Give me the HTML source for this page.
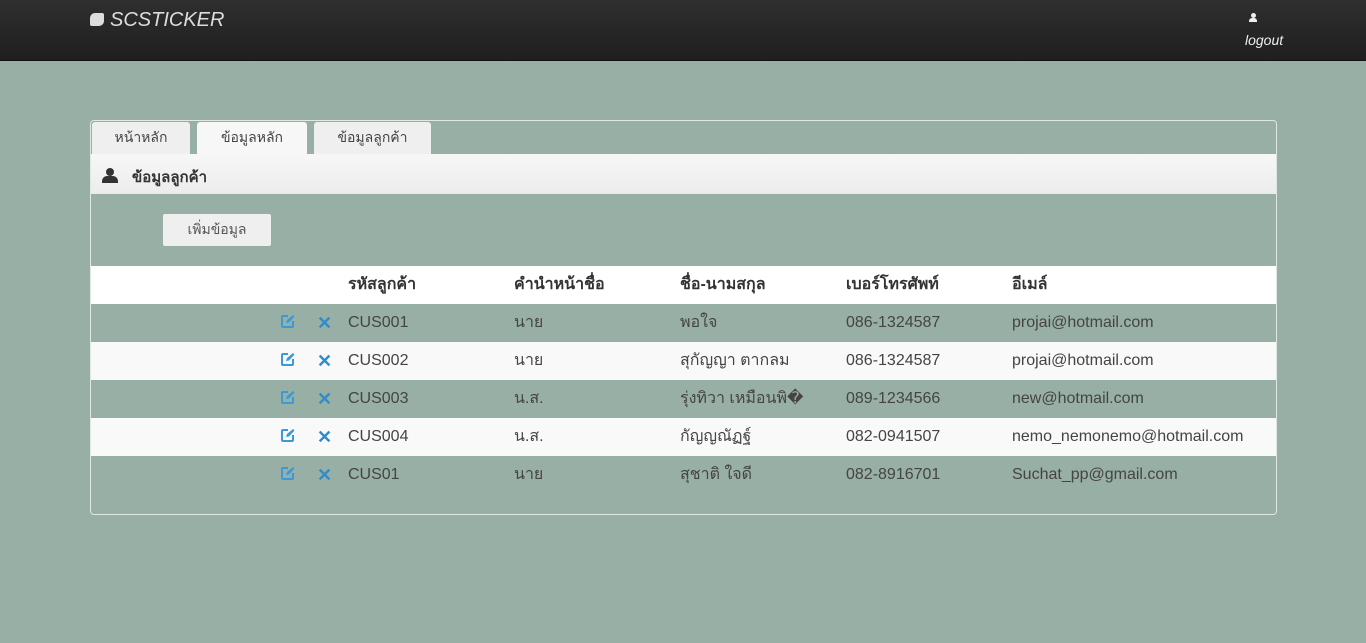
<!DOCTYPE html>
<html><head><meta charset="utf-8"><style>
body{margin:0;width:1366px;height:643px;background:#98afa5;font-family:"Liberation Sans","Noto Sans CJK SC",sans-serif;position:relative;overflow:hidden}
.nav{position:absolute;left:0;top:0;width:1366px;height:60px;background:linear-gradient(#2f2f2f,#1f1f1f);border-bottom:1px solid #111}
.brand{position:absolute;left:90px;top:9px;color:#ddd;font-size:20px;font-style:italic}
.brand i{display:inline-block;width:14px;height:13px;background:#ddd;border-radius:5px 2px 5px 2px;margin-right:6px;vertical-align:0}
.lo{position:absolute;left:1245px;top:32px;color:#eee;font-size:14px;font-style:italic}
.panel{position:absolute;left:90px;top:120px;width:1185px;height:393px;border:1px solid #e0e8e4;border-radius:4px}
.tab{position:absolute;top:1px;height:32px;background:#efefef;color:#444;font-size:14px;text-align:center;line-height:30px;border-radius:3px 3px 0 0}
.head{position:absolute;left:0;top:33px;width:1185px;height:40px;background:linear-gradient(#f7f7f7,#ececec);font-size:15px;font-weight:bold;color:#333;line-height:46px}
.btn{position:absolute;left:72px;top:93px;width:108px;height:32px;background:#efefef;border-radius:2px;font-size:14px;color:#555;text-align:center;line-height:30px}
.row{position:absolute;left:0;width:1185px;height:38px;font-size:16px;color:#444;line-height:38px}
.row span{position:absolute}
.w{background:#f9f9f9}
.th{background:#fff;font-weight:bold;color:#333}
.row span.e{left:189px;top:10px;line-height:0}
.x{left:226px;color:#2a8ed0;font-weight:bold;font-size:18px}
</style></head><body>
<div class="nav"><div class="brand"><i></i>SCSTICKER</div>
<div style="position:absolute;left:1249px;top:13px;width:8px;height:9px"><div style="width:5px;height:5px;border-radius:50%;background:#eee;margin-left:1.5px"></div><div style="width:8px;height:4px;background:#eee;border-radius:3px 3px 0 0"></div></div>
<div class="lo">logout</div></div>
<div class="panel">
<div class="tab" style="left:1px;width:98px">หน้าหลัก</div>
<div class="tab" style="left:106px;width:110px;background:#f7f7f7">ข้อมูลหลัก</div>
<div class="tab" style="left:223px;width:117px">ข้อมูลลูกค้า</div>
<div class="head"><span style="position:absolute;left:11px;top:14px;width:16px;height:16px;line-height:0"><span style="display:block;width:8px;height:8px;border-radius:50%;background:#333;margin-left:4px"></span><span style="display:block;width:16px;height:7px;background:#333;border-radius:5px 5px 0 0"></span></span><span style="position:absolute;left:41px;top:1px">ข้อมูลลูกค้า</span></div>
<div class="btn">เพิ่มข้อมูล</div>
<div class="row th" style="top:145px"><span style="left:257px">รหัสลูกค้า</span><span style="left:423px">คำนำหน้าชื่อ</span><span style="left:589px">ชื่อ-นามสกุล</span><span style="left:755px">เบอร์โทรศัพท์</span><span style="left:921px">อีเมล์</span></div>
<div class="row" style="top:183px"><span class="e"><svg width="15" height="15" viewBox="0 0 15 15"><path d="M8 2H3a1 1 0 0 0-1 1v9a1 1 0 0 0 1 1h9a1 1 0 0 0 1-1V7" fill="none" stroke="#3a9ad6" stroke-width="2"/><path d="M6 9l1-3 6-5 1.5 1.5-5.5 6z" fill="#3a9ad6"/></svg></span><span class="x">✕</span><span style="left:257px">CUS001</span><span style="left:423px">นาย</span><span style="left:589px">พอใจ</span><span style="left:755px">086-1324587</span><span style="left:921px">projai@hotmail.com</span></div>
<div class="row w" style="top:221px"><span class="e"><svg width="15" height="15" viewBox="0 0 15 15"><path d="M8 2H3a1 1 0 0 0-1 1v9a1 1 0 0 0 1 1h9a1 1 0 0 0 1-1V7" fill="none" stroke="#3a9ad6" stroke-width="2"/><path d="M6 9l1-3 6-5 1.5 1.5-5.5 6z" fill="#3a9ad6"/></svg></span><span class="x">✕</span><span style="left:257px">CUS002</span><span style="left:423px">นาย</span><span style="left:589px">สุกัญญา ตากลม</span><span style="left:755px">086-1324587</span><span style="left:921px">projai@hotmail.com</span></div>
<div class="row" style="top:259px"><span class="e"><svg width="15" height="15" viewBox="0 0 15 15"><path d="M8 2H3a1 1 0 0 0-1 1v9a1 1 0 0 0 1 1h9a1 1 0 0 0 1-1V7" fill="none" stroke="#3a9ad6" stroke-width="2"/><path d="M6 9l1-3 6-5 1.5 1.5-5.5 6z" fill="#3a9ad6"/></svg></span><span class="x">✕</span><span style="left:257px">CUS003</span><span style="left:423px">น.ส.</span><span style="left:589px">รุ่งทิวา เหมือนพิ�</span><span style="left:755px">089-1234566</span><span style="left:921px">new@hotmail.com</span></div>
<div class="row w" style="top:297px"><span class="e"><svg width="15" height="15" viewBox="0 0 15 15"><path d="M8 2H3a1 1 0 0 0-1 1v9a1 1 0 0 0 1 1h9a1 1 0 0 0 1-1V7" fill="none" stroke="#3a9ad6" stroke-width="2"/><path d="M6 9l1-3 6-5 1.5 1.5-5.5 6z" fill="#3a9ad6"/></svg></span><span class="x">✕</span><span style="left:257px">CUS004</span><span style="left:423px">น.ส.</span><span style="left:589px">กัญญณัฏฐ์</span><span style="left:755px">082-0941507</span><span style="left:921px">nemo_nemonemo@hotmail.com</span></div>
<div class="row" style="top:335px"><span class="e"><svg width="15" height="15" viewBox="0 0 15 15"><path d="M8 2H3a1 1 0 0 0-1 1v9a1 1 0 0 0 1 1h9a1 1 0 0 0 1-1V7" fill="none" stroke="#3a9ad6" stroke-width="2"/><path d="M6 9l1-3 6-5 1.5 1.5-5.5 6z" fill="#3a9ad6"/></svg></span><span class="x">✕</span><span style="left:257px">CUS01</span><span style="left:423px">นาย</span><span style="left:589px">สุชาติ ใจดี</span><span style="left:755px">082-8916701</span><span style="left:921px">Suchat_pp@gmail.com</span></div>
</div>
</body></html>
